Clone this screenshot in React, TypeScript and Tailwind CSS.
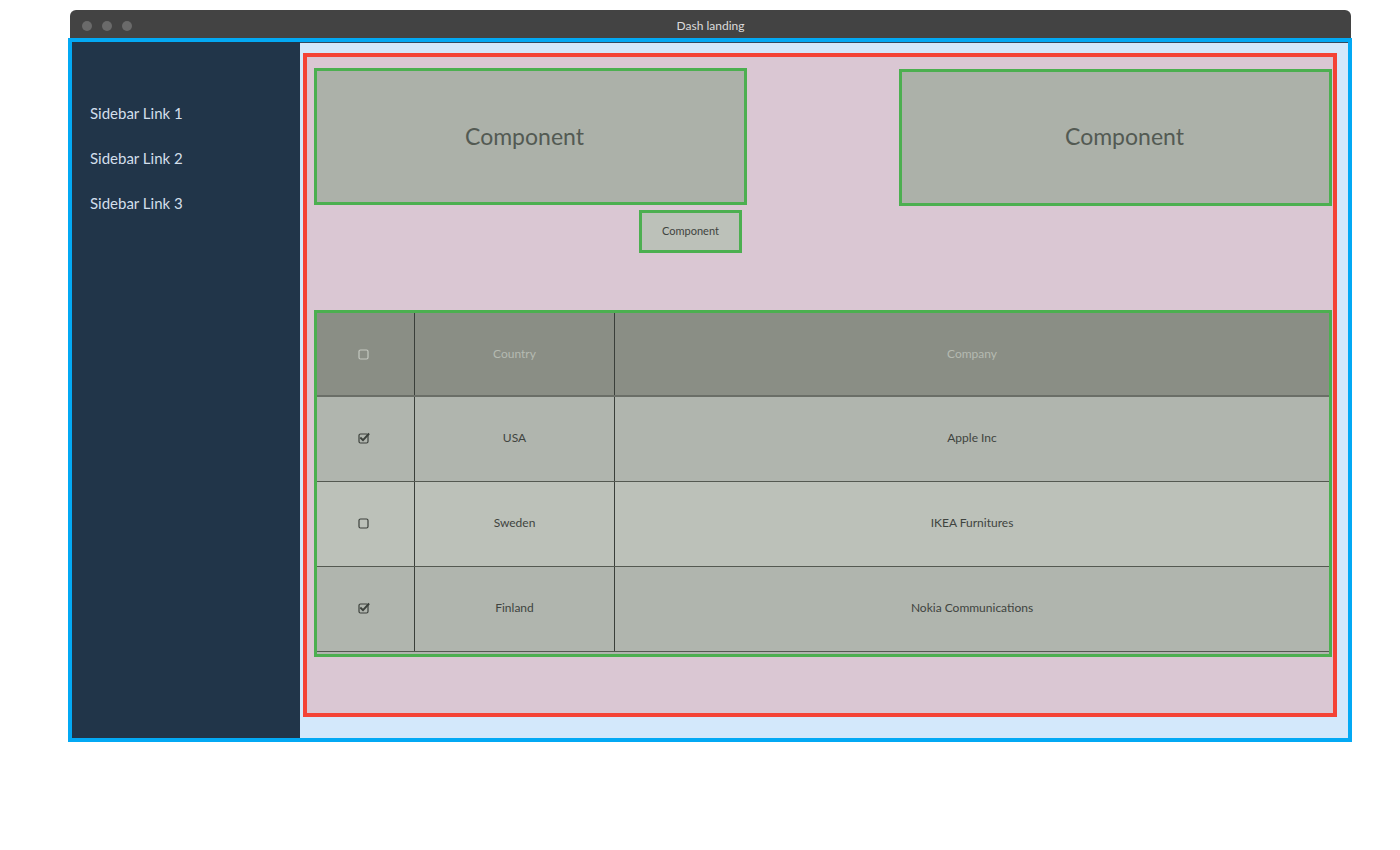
import { ReactNode } from 'react';

const rows = [
  { checked: true, country: 'USA', company: 'Apple Inc', bg: 'bg-[#b0b5ae]' },
  { checked: false, country: 'Sweden', company: 'IKEA Furnitures', bg: 'bg-[#bcc1b9]' },
  { checked: true, country: 'Finland', company: 'Nokia Communications', bg: 'bg-[#b0b5ae]' },
];

function Box({ checked, light }: { checked: boolean; light?: boolean }) {
  const c = light ? '#c4c8c0' : '#3c413c';
  return (
    <svg width="12" height="12" viewBox="0 0 12 12" className="block">
      <rect x="1" y="2" width="9" height="9" rx="1.5" fill="none" stroke={c} strokeWidth="1.2" />
      {checked && (
        <path d="M3 6.2 L5 8.2 L10.5 2.2" fill="none" stroke={c} strokeWidth="1.9" strokeLinecap="square" />
      )}
    </svg>
  );
}

function Cell({ children, w, last }: { children: ReactNode; w: string; last?: boolean }) {
  return (
    <div className={`${w} ${last ? 'flex-1' : 'border-r border-[#3a3f3a]'} flex items-center justify-center`}>
      {children}
    </div>
  );
}

export default function App() {
  return (
    <div className="w-[1400px] h-[850px] bg-white pt-[10px] font-['Lato','Liberation_Sans',sans-serif]">
      <div className="ml-[68px] w-[1284px]">
        {/* Title bar */}
        <div className="ml-[2px] w-[1281px] h-[28px] bg-[#434343] rounded-t-[6px] flex items-center relative">
          <div className="flex gap-[10px] pl-[12px] pt-[4px]">
            <span className="w-[10px] h-[10px] rounded-full bg-[#6a6a6a]" />
            <span className="w-[10px] h-[10px] rounded-full bg-[#6a6a6a]" />
            <span className="w-[10px] h-[10px] rounded-full bg-[#6a6a6a]" />
          </div>
          <div className="absolute left-0 right-0 top-[8px] text-center text-[12px] leading-[16px] text-[#dcdcdc]">Dash landing</div>
        </div>

        {/* Window frame */}
        <div className="border-4 border-[#03a9f4] h-[704px] flex">
          <aside className="w-[228px] bg-[#213549] pt-[61px] pl-[18px] flex flex-col gap-[24px]">
            <a className="text-[15px] leading-[21px] text-[#d3dfeb]">Sidebar Link 1</a>
            <a className="text-[15px] leading-[21px] text-[#d3dfeb]">Sidebar Link 2</a>
            <a className="text-[15px] leading-[21px] text-[#d3dfeb]">Sidebar Link 3</a>
          </aside>

          <main className="flex-1 bg-[#d3e8fb] border-t border-[#34495e] pl-[3px] pt-[10px]">
            <div className="w-[1034px] h-[664px] border-4 border-[#f44336] bg-[#dac7d3] pl-[7px] pt-[11px] pr-[1px]">
              <div className="flex justify-between">
                <div className="w-[433px] h-[137px] pr-[12px] border-[3px] border-[#4caf50] bg-[#acb1a9] flex items-center justify-center text-[23px] text-[#535a53]">
                  Component
                </div>
                <div className="w-[433px] h-[137px] mt-[1px] pl-[18px] pb-[2px] border-[3px] border-[#4caf50] bg-[#acb1a9] flex items-center justify-center text-[23px] text-[#535a53]">
                  Component
                </div>
              </div>

              <div className="ml-[325px] mt-[4px] w-[103px] h-[43px] border-[3px] border-[#4caf50] bg-[#bcc1b9] flex items-center justify-center text-[11px] text-[#3f443f]">
                Component
              </div>

              {/* Table */}
              <div className="mt-[57px] w-[1018px] h-[347px] border-[3px] border-[#4caf50] bg-[#b0b5ae] text-[12px]">
                <div className="flex h-[84px] bg-[#8a8e85] border-b-2 border-[#6a6e67] text-[#b5bab1]">
                  <Cell w="w-[98px] pr-[4px]"><Box checked={false} light /></Cell>
                  <Cell w="w-[200px]">Country</Cell>
                  <Cell w="" last>Company</Cell>
                </div>
                {rows.map((r) => (
                  <div key={r.country} className={`flex h-[85px] ${r.bg} border-b border-[#545951] text-[#3f443f]`}>
                    <Cell w="w-[98px] pr-[4px] pb-[3px]"><Box checked={r.checked} /></Cell>
                    <Cell w="w-[200px] pb-[3px]">{r.country}</Cell>
                    <Cell w="pb-[3px]" last>{r.company}</Cell>
                  </div>
                ))}
              </div>
            </div>
          </main>
        </div>
      </div>
    </div>
  );
}
